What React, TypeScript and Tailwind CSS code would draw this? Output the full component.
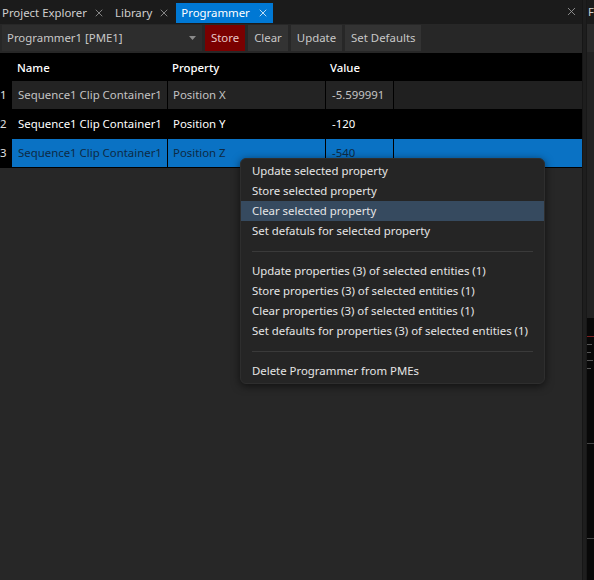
import { X } from 'lucide-react';

const font = { fontFamily: '"Noto Sans", "Open Sans", sans-serif' };

const rows = [
  { n: '1', name: 'Sequence1 Clip Container1', prop: 'Position X', value: '-5.599991', kind: 'normal' },
  { n: '2', name: 'Sequence1 Clip Container1', prop: 'Position Y', value: '-120', kind: 'edit' },
  { n: '3', name: 'Sequence1 Clip Container1', prop: 'Position Z', value: '-540', kind: 'selected' },
];

const menuGroups = [
  ['Update selected property', 'Store selected property', 'Clear selected property', 'Set defatuls for selected property'],
  [
    'Update properties (3) of selected entities (1)',
    'Store properties (3) of selected entities (1)',
    'Clear properties (3) of selected entities (1)',
    'Set defaults for properties (3) of selected entities (1)',
  ],
  ['Delete Programmer from PMEs'],
];

function Tab({ label, active }: { label: string; active?: boolean }) {
  return (
    <div
      className={
        active
          ? 'flex h-[20px] items-center gap-[7px] bg-[#0078d4] pl-[5px] pr-[4px] text-white'
          : 'flex h-[20px] items-center gap-[6px] pl-[2px] pr-[3px] text-[#cfcfcf]'
      }
    >
      <span>{label}</span>
      <X size={12} strokeWidth={1.5} className={active ? 'text-white' : 'text-[#a8a8a8]'} />
    </div>
  );
}

function ToolButton({ label, tone }: { label: string; tone?: 'red' }) {
  return (
    <div
      className={
        tone === 'red'
          ? 'flex h-[26px] items-center bg-[#7a0000] px-[6px] text-[#e8c8c8]'
          : 'flex h-[26px] items-center bg-[#333333] px-[6px] text-[#c8c8c8]'
      }
    >
      {label}
    </div>
  );
}

function ContextMenu() {
  return (
    <div className="absolute left-[240px] top-[158px] w-[305px] rounded-[6px] border border-[#2e2e2e] bg-[#252525] py-[2px] text-[#e6e6e6] shadow-[0_2px_8px_rgba(0,0,0,0.6)]">
      {menuGroups.map((group, gi) => (
        <div key={gi}>
          {gi > 0 && (
            <div className="flex h-[20px] items-center px-[11px]">
              <div className="h-px w-full bg-[#3a3a3a]" />
            </div>
          )}
          {group.map((item) => (
            <div
              key={item}
              className={
                item === 'Clear selected property'
                  ? 'flex h-[20px] items-center bg-[#364a5f] pl-[11px]'
                  : 'flex h-[20px] items-center pl-[11px]'
              }
            >
              {item}
            </div>
          ))}
        </div>
      ))}
    </div>
  );
}

export default function App() {
  return (
    <div
      className="relative flex h-[580px] w-[594px] overflow-hidden whitespace-nowrap bg-[#1b1b1b] text-[11.4px]"
      style={font}
    >
      <div className="flex w-[582px] flex-col">
        {/* tabs */}
        <div className="flex h-[24px] items-end pb-[1px]">
          <Tab label="Project Explorer" />
          <div className="w-[5px]" />
          <Tab label="Library" />
          <div className="w-[3px]" />
          <Tab label="Programmer" active />
          <div className="flex-1" />
          <X size={13} strokeWidth={1.6} className="mb-[5px] mr-[4px] text-[#9a9a9a]" />
        </div>

        <div className="flex flex-1 flex-col bg-[#272727]">
          {/* toolbar */}
          <div className="flex h-[29px] items-start gap-[3px] pl-[2px] pt-[1px]">
            <div className="flex h-[26px] w-[200px] items-center justify-between bg-[#2d2d2d] pl-[5px] pr-[6px] text-[#c8c8c8]">
              <span>Programmer1 [PME1]</span>
              <svg width="7" height="4" viewBox="0 0 7 4">
                <path d="M0 0 L7 0 L3.5 4 Z" fill="#8a8a8a" />
              </svg>
            </div>
            <ToolButton label="Store" tone="red" />
            <ToolButton label="Clear" />
            <ToolButton label="Update" />
            <ToolButton label="Set Defaults" />
          </div>

          {/* grid */}
          <div className="flex flex-col bg-black pt-[1px]">
            <div className="flex h-[27px] items-center font-medium text-white">
              <div className="w-[17px]" />
              <div className="w-[155px]">Name</div>
              <div className="w-[158px]">Property</div>
              <div>Value</div>
            </div>
            {rows.map((r) => {
              const cell =
                r.kind === 'selected'
                  ? 'bg-[#0a72c4] text-[#0d2a44]'
                  : r.kind === 'edit'
                    ? 'bg-black text-white'
                    : 'bg-[#232323] text-[#c4c4c4]';
              const rest = r.kind === 'selected' ? 'bg-[#0a72c4]' : r.kind === 'edit' ? 'bg-black' : 'bg-[#202020]';
              return (
                <div key={r.n} className="flex h-[29px] gap-px border-b border-black">
                  <div className="flex w-[11px] items-center bg-black text-[#e0e0e0]">{r.n}</div>
                  <div className={`flex w-[155px] items-center pl-[6px] ${cell}`}>{r.name}</div>
                  <div className={`flex w-[157px] items-center pl-[5px] ${cell}`}>{r.prop}</div>
                  <div className={`flex w-[67px] items-center pl-[6px] ${cell}`}>{r.value}</div>
                  <div className={`flex-1 ${rest}`} />
                </div>
              );
            })}
          </div>
        </div>
      </div>

      {/* splitter */}
      <div className="w-[4px] border-l border-[#161616] bg-[#1e1e1e]" />

      {/* right docked panel, mostly cut off */}
      <div className="flex w-[8px] flex-col overflow-hidden border-l border-[#181818]">
        <div className="flex h-[24px] items-center bg-[#1b1b1b] pl-[1px] text-[#d0d0d0]">F</div>
        <div className="h-[28px] bg-[#2a2a2a]" />
        <div className="h-[266px] bg-[#222222]" />
        <div className="flex flex-1 flex-col gap-[7px] bg-[#080808] pt-[18px]">
          <div className="h-px w-full bg-[#7a2020]" />
          <div className="h-px w-[5px] bg-[#555]" />
          <div className="h-px w-[4px] bg-[#555]" />
          <div className="h-px w-[6px] bg-[#555]" />
          <div className="h-px w-[4px] bg-[#555]" />
          <div className="h-[60px]" />
          <div className="h-px w-full bg-[#444]" />
          <div className="h-[80px]" />
          <div className="h-px w-full bg-[#444]" />
        </div>
      </div>

      <ContextMenu />
    </div>
  );
}
